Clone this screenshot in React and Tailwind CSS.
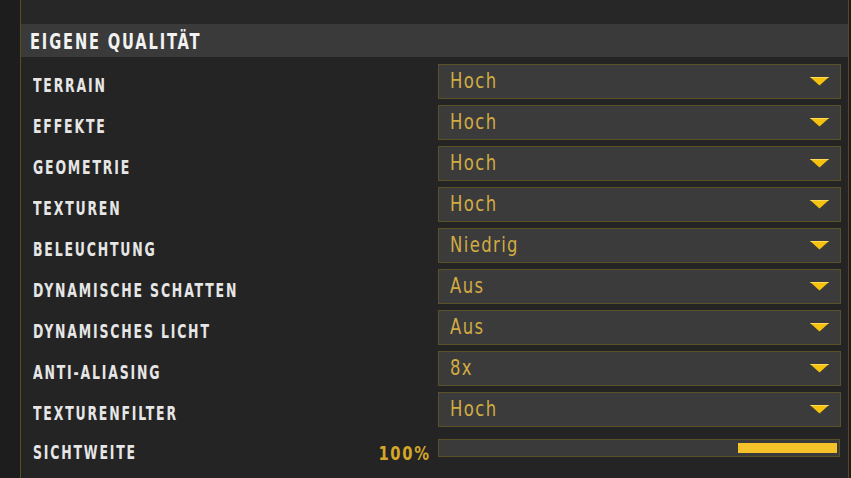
import React from 'react';

const rows = [
  { label: 'TERRAIN', value: 'Hoch' },
  { label: 'EFFEKTE', value: 'Hoch' },
  { label: 'GEOMETRIE', value: 'Hoch' },
  { label: 'TEXTUREN', value: 'Hoch' },
  { label: 'BELEUCHTUNG', value: 'Niedrig' },
  { label: 'DYNAMISCHE SCHATTEN', value: 'Aus' },
  { label: 'DYNAMISCHES LICHT', value: 'Aus' },
  { label: 'ANTI-ALIASING', value: '8x' },
  { label: 'TEXTURENFILTER', value: 'Hoch' },
];

const cond = { fontFamily: '"DejaVu Sans Condensed", "Liberation Sans", sans-serif' };

// yellow dropdown arrow
const Arrow = () => (
  <svg width="19" height="9" viewBox="0 0 19 9" className="shrink-0">
    <polygon points="0,0 19,0 9.5,8.5" fill="#f4c20f" />
    <line x1="0.5" y1="0.5" x2="18.5" y2="0.5" stroke="#ffd95a" strokeWidth="1" />
  </svg>
);

const Label = ({ children }) => (
  <span
    className="inline-block origin-left scale-x-[0.73] whitespace-nowrap text-[19px] font-bold leading-none tracking-[2.5px] text-[#e6e6e6]"
    style={cond}
  >
    {children}
  </span>
);

const Dropdown = ({ value }) => (
  <div className="flex h-[35px] flex-1 items-center justify-between border border-[#5b5127] bg-[#3b3b3b] pl-[11px] pr-[11px]">
    <span
      className="inline-block origin-left scale-x-[0.87] text-[21px] leading-none tracking-[1.6px] text-[#d2ab43]"
      style={cond}
    >
      {value}
    </span>
    <Arrow />
  </div>
);

export default function App() {
  return (
    <div className="flex h-[478px] w-[851px] overflow-hidden bg-[#1d1d1d]">
      <div className="w-[20px] shrink-0" />
      <div className="flex w-[829px] shrink-0 flex-col border-x border-[#5a4d1d] bg-[#242424]">
        <div className="h-[24px] bg-[#272727]" />
        <div className="flex h-[33px] items-center bg-[#3a3a3a] pl-[9px]">
          <span
            className="inline-block origin-left scale-x-[0.74] whitespace-nowrap pt-[2px] text-[22px] font-bold leading-none tracking-[2.5px] text-[#f2f2f2]"
            style={cond}
          >
            EIGENE QUALITÄT
          </span>
        </div>

        <div className="flex flex-col gap-[6px] pt-[7px]">
          {rows.map((r) => (
            <div key={r.label} className="flex h-[35px]">
              <div className="flex w-[417px] shrink-0 items-center pl-[12px] pt-[8px]">
                <Label>{r.label}</Label>
              </div>
              <div className="mr-[7px] flex flex-1">
                <Dropdown value={r.value} />
              </div>
            </div>
          ))}
        </div>

        <div className="mt-[12px] flex h-[18px]">
          <div className="flex w-[417px] shrink-0 items-center justify-between pl-[12px] pr-[7px] pt-[9px]">
            <Label>SICHTWEITE</Label>
            <span
              className="inline-block origin-right scale-x-[0.82] text-[20px] font-bold leading-none tracking-[2px] text-[#d4a62a]"
              style={cond}
            >
              100%
            </span>
          </div>
          <div className="mr-[8px] flex flex-1 items-start justify-end border border-[#5b5127] bg-[#3a3a3a] pr-[2px] pt-[3px]">
            <div className="h-[10px] w-[99px] bg-[#f6c22a]" />
          </div>
        </div>
      </div>
    </div>
  );
}
